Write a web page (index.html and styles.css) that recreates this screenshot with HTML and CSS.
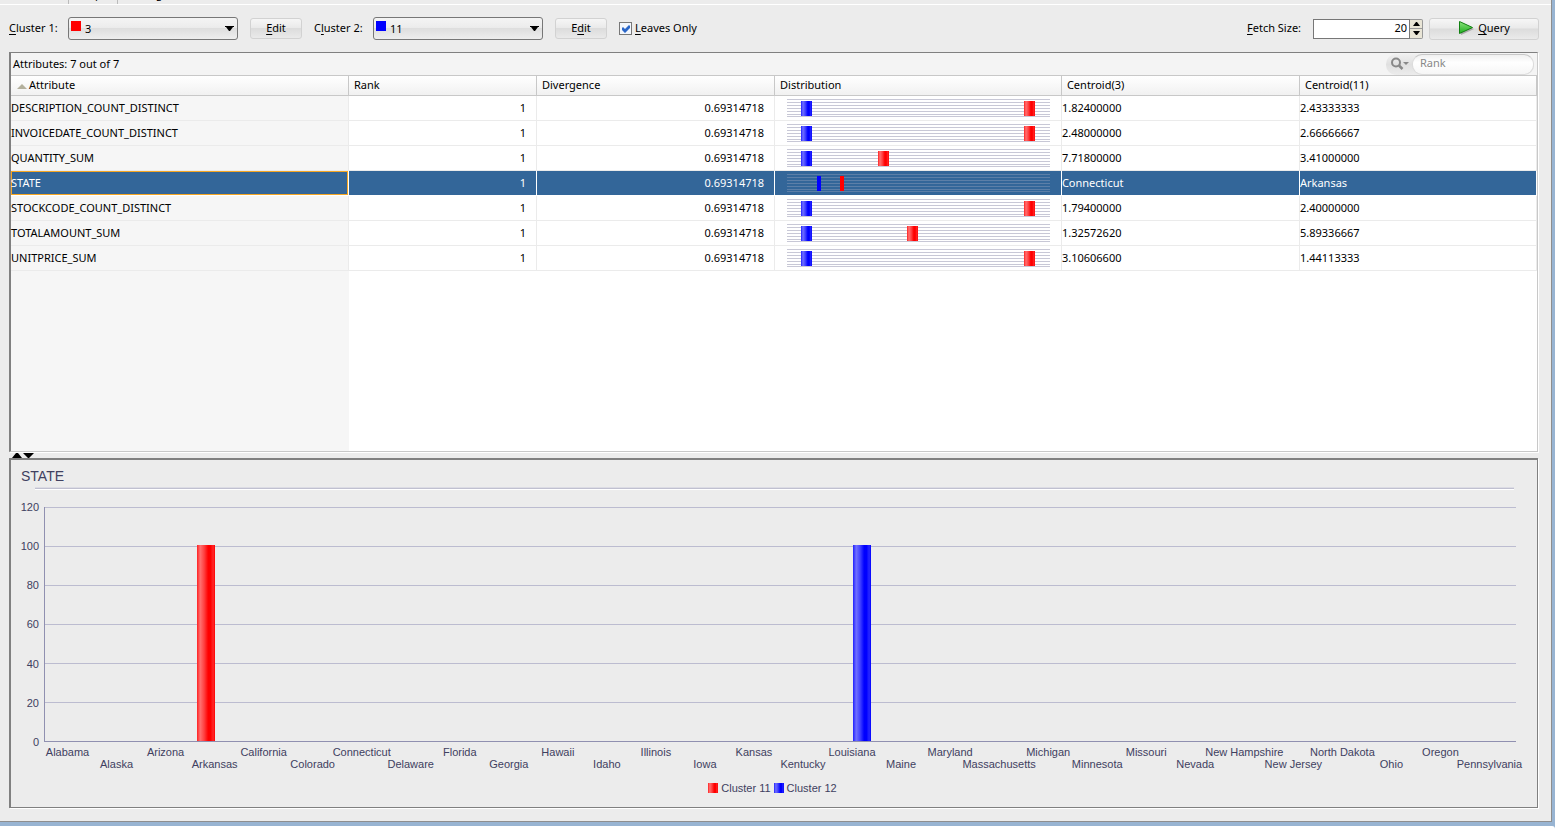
FILE: index.html
```html
<!DOCTYPE html>
<html lang="en">
<head>
<meta charset="utf-8">
<title>Cluster Compare</title>
<link rel="stylesheet" href="styles.css">
</head>
<body>
<main class="window">
  <nav class="tabs" aria-label="Views">
    <span class="tab">Tree,</span>
    <span class="tab tab-active">Compare</span>
    <span class="tab tab-last">Settings,</span>
  </nav>
  <form class="toolbar">
    <label class="caption" for="cluster1"><u>C</u>luster 1:</label>
    <span class="combo">
      <select id="cluster1"><option>3</option></select>
      <span class="swatch red"></span>
      <svg class="arrow" viewBox="0 0 9 5"><path d="M0 0H9V1H8L5 5H4L1 1H0Z"/></svg>
    </span>
    <button type="button" class="btn edit"><span><u>E</u>dit</span></button>
    <label class="caption" for="cluster2">C<u>l</u>uster 2:</label>
    <span class="combo">
      <select id="cluster2"><option>11</option></select>
      <span class="swatch blue"></span>
      <svg class="arrow" viewBox="0 0 9 5"><path d="M0 0H9V1H8L5 5H4L1 1H0Z"/></svg>
    </span>
    <button type="button" class="btn edit"><span>E<u>d</u>it</span></button>
    <label class="check"><input type="checkbox" checked><svg class="tick" viewBox="0 0 8 8"><path d="M0 3L1 2L3 4L7 0L8 1V3L3 8L0 5Z"/></svg><span><u>L</u>eaves Only</span></label>
    <span class="spacer"></span>
    <label class="caption fetch" for="fetch"><u>F</u>etch Size:</label>
    <span class="spinner">
      <input id="fetch" type="text" value="20">
      <span class="steps">
        <button type="button" aria-label="Increase"><svg viewBox="0 0 7 4"><path d="M3 0H4L7 4H0Z"/></svg></button>
        <button type="button" aria-label="Decrease"><svg viewBox="0 0 7 4"><path d="M0 0H7L4 4H3Z"/></svg></button>
      </span>
    </span>
    <button type="button" class="btn query">
      <svg class="play" viewBox="0 0 16 16"><defs><linearGradient id="pg" x1="0" y1="0" x2="0" y2="1"><stop offset="0" stop-color="#8be37c"/><stop offset="1" stop-color="#1fae1f"/></linearGradient></defs><path d="M3 3L16 9L3 15Z" fill="#aaa"/><path d="M1.500 1.500V13.500L14.500 7.500Z" fill="url(#pg)" stroke="#108010"/></svg>
      <span><u>Q</u>uery</span>
    </button>
  </form>

  <section class="grid-panel">
    <div class="grid-bar">
      <span>Attributes: 7 out of 7</span>
      <div class="search">
        <button type="button" aria-label="Search options"><svg viewBox="0 0 20 14"><circle cx="6" cy="5.500" r="4" fill="none" stroke="#888" stroke-width="2"/><path d="M9 8.500L12.500 12" stroke="#888" stroke-width="2.500"/><path d="M13 5H19L16 8Z" fill="#888"/></svg></button>
        <input type="text" placeholder="Rank" aria-label="Search">
      </div>
    </div>
    <div class="grid-body">
    <table>
      <colgroup><col class="c1"><col class="c2"><col class="c3"><col class="c4"><col class="c3"><col></colgroup>
      <thead><tr><th><svg class="sort" viewBox="0 0 10 5"><path d="M5 0L10 5H0Z"/></svg>Attribute</th><th>Rank</th><th>Divergence</th><th>Distribution</th><th>Centroid(3)</th><th>Centroid(11)</th></tr></thead>
      <tbody id="rows"></tbody>
    </table>
    </div>
  </section>

  <div class="splitter"><svg viewBox="0 0 22 5"><path d="M0 5L4 0H6L10 5ZM11 0H22L17 5H16Z"/></svg></div>

  <section class="chart-panel">
    <h2>STATE</h2>
    <div class="rule"></div>
    <div class="plot-row">
      <div class="y-axis"><span>120</span><span>100</span><span>80</span><span>60</span><span>40</span><span>20</span><span>0</span></div>
      <div class="plot">
        <div class="line"></div><div class="line"></div><div class="line"></div><div class="line"></div><div class="line"></div><div class="line"></div>
        <div class="bar bar-red" style="left:10.34%;height:83.8%"></div>
        <div class="bar bar-blue" style="left:54.93%;height:83.8%"></div>
      </div>
    </div>
    <div class="x-axis" id="states"></div>
    <div class="legend"><span class="key bar-red"></span><span>Cluster 11</span><span class="key bar-blue"></span><span>Cluster 12</span></div>
  </section>
</main>
<script src="app.js"></script>
</body>
</html>
```
FILE: styles.css
```css
* { box-sizing: border-box; }
body { margin: 0; background: #98b4d2; font: 11px/14px Tahoma, "Noto Sans", sans-serif; color: #000; }
button, input, select { font: inherit; color: inherit; }
u { text-underline-offset: 2px; }
.window { display: flex; flex-direction: column; min-height: calc(100vh - 7px); margin-right: 3px; padding-bottom: 13px; background: #ececec; border-right: 1px solid #8e8e8e; border-bottom: 1px solid #8e8e8e; }
body::after { content: ""; display: block; height: 3px; margin-top: 4px; background: #fff; border-top-right-radius: 3px; }

.tabs { display: flex; height: 5px; overflow: hidden; align-items: flex-end; border-bottom: 1px solid #fff; }
.tab { flex: none; height: 17px; padding: 0 4px; width: 68px; }
.tab-active { width: 50px; padding: 0 2px; border: solid #bbb; border-width: 0 1px; }
.tab-last { padding: 0 8px; }

.toolbar { display: flex; align-items: center; height: 47px; padding: 0 12px 0 9px; }
.caption { width: 59px; padding-bottom: 2px; }
.combo { position: relative; width: 170px; height: 23px; margin-right: 12px; }
.combo select { appearance: none; width: 100%; height: 100%; padding: 1px 0 0 16px; border: 1px solid #777; border-radius: 3px; background: linear-gradient(#f4f4f4, #ececec 45%, #dedede 50%, #eee); }
.swatch { position: absolute; left: 3px; top: 4px; width: 10px; height: 10px; }
.red { background: #f00; }
.blue { background: #00f; }
.arrow { position: absolute; right: 4px; top: 9px; width: 9px; height: 5px; }
.btn { display: flex; align-items: center; justify-content: center; gap: 4px; padding: 0 0 2px; border: 1px solid #d2d2d2; border-radius: 3px; background: linear-gradient(#f6f6f6, #eaeaea 45%, #dcdcdc 50%, #eaeaea); }
.edit { width: 52px; height: 21px; margin-right: 12px; }
.check { display: flex; align-items: center; gap: 3px; position: relative; }
.check span { padding-bottom: 2px; }
.check input { appearance: none; width: 13px; height: 13px; margin: 0; border: 1px solid #777; background: #f2f6fc; }
.tick { position: absolute; left: 3px; top: 4px; width: 8px; height: 8px; fill: #2a66c8; }
.spacer { flex: 1; }
.fetch { width: 66px; }
.spinner { display: flex; width: 110px; height: 20px; margin-right: 6px; }
.spinner input { flex: 1; min-width: 0; padding: 0 2px 2px; text-align: right; border: 1px solid #777; background: #fff; }
.steps { display: flex; flex-direction: column; width: 13px; border: 1px solid #999; border-left: 0; border-radius: 0 2px 2px 0; background: #e9e5d6; }
.steps button { flex: 1; display: flex; align-items: center; justify-content: center; padding: 0; border: 0; background: none; }
.steps button + button { border-top: 1px solid #999; }
.steps svg { width: 7px; height: 4px; }
.query { width: 110px; height: 22px; }
.play { width: 16px; height: 16px; }

.grid-panel { display: flex; flex-direction: column; flex: 401 1 0; margin: 0 13px 0 9px; border: solid; border-width: 1px 1px 1px 2px; border-color: #808080 #c8c8c8 #c8c8c8 #808080; box-shadow: 1px 1px #fff; background: #f4f4f4; }
.grid-bar { display: flex; align-items: center; justify-content: space-between; height: 22px; padding: 0 3px 0 2px; }
.search { display: flex; height: 21px; background: linear-gradient(#f0f0f0, #e0e0e0 50%, #ececec); border-radius: 10px; }
.search button { display: flex; align-items: center; width: 26px; padding: 0 2px 0 4px; border: 0; background: none; }
.search svg { width: 20px; height: 14px; }
.search input { width: 122px; padding: 0 7px 2px; border: 1px solid #dcdcdc; border-top-color: #c8c8c8; border-radius: 10px; background: linear-gradient(#f0f0f0, #fff 40%, #f6f6f6); }
.search input::placeholder { color: #888; opacity: 1; }
.grid-body { flex: 1; background: linear-gradient(90deg, #f6f6f6 22.15%, #fff 22.15%); }
table { width: 100%; table-layout: fixed; border-collapse: separate; border-spacing: 0; }
.c1 { width: 22.15%; }
.c2 { width: 12.32%; }
.c3 { width: 15.6%; }
.c4 { width: 18.8%; }
th { height: 21px; padding: 0 5px 2px; text-align: left; font-weight: normal; background: linear-gradient(#fff, #f1f1f1); border: solid #c8c8c8; border-width: 1px 1px 1px 0; }
.sort { width: 10px; height: 5px; margin: 0 2px 0 1px; fill: #b3b09c; }
td { height: 25px; padding: 0; border: solid #ebebeb; border-width: 0 1px 1px 0; }
td.num { padding-right: 10px; text-align: right; }
.selected td { background: #336699; color: #fff; border-color: #fff; }
.selected td:first-child { box-shadow: inset 0 0 0 1px #f5a623; }
.dist { position: relative; height: 18px; margin: 0 11px 0 12px; background: repeating-linear-gradient(#c8c8d6 0 1px, transparent 1px 3px); border-bottom: 1px solid #c8c8d6; }
.selected .dist { background: repeating-linear-gradient(#5c7fa8 0 1px, transparent 1px 3px); border-color: #5c7fa8; }
.mark { position: absolute; top: 2px; width: 11px; height: 15px; }
.thin { width: 4px; }

.splitter { height: 6px; padding: 1px 0 0 12px; }
.splitter svg { display: block; width: 22px; height: 5px; }

.chart-panel { display: flex; flex-direction: column; flex: 350 1 0; margin: 0 13px 0 9px; border: solid #808080; border-width: 2px 1px 1px 2px; box-shadow: 1px 1px #fff; font: 11px/12px "Liberation Sans", Arial, sans-serif; color: #404060; }
h2 { margin: 8px 10px 3px; font-size: 14px; line-height: 16px; font-weight: normal; }
.rule { height: 3px; margin: 0 23px 0 24px; background: linear-gradient(#dcdce4 0 1px, #c0c0d0 1px 2px, #fff 2px); }
.plot-row { display: flex; flex: 1; margin: 17px 21px 0 0; }
.y-axis { display: flex; flex-direction: column; justify-content: space-between; width: 28px; margin: -6px 5px -6px 0; text-align: right; }
.plot { position: relative; display: flex; flex: 1; flex-direction: column; border-left: 1px solid #9090b0; border-bottom: 1px solid #9090b0; }
.line { flex: 1; border-top: 1px solid #bcbcd0; }
.bar { position: absolute; bottom: 0; width: 1.25%; }
.bar-red { background: linear-gradient(90deg, #ff2020, #ff7070 18%, #ff4040 40%, #f00 62%, #f00 75%, #ff2828 90%, #f00); }
.bar-blue { background: linear-gradient(90deg, #2020ff, #7070ff 18%, #4040ff 40%, #00f 62%, #00f 75%, #2828ff 90%, #00f); }
.x-axis { display: grid; grid-template-columns: repeat(30, minmax(0, 1fr)); margin: 4px 23px 0 32px; }
.x-axis span { display: flex; justify-content: center; white-space: nowrap; }
.x-axis span:nth-child(even) { padding-top: 12px; }
.legend { display: flex; justify-content: center; gap: 3px; padding: 12px 3px 13px 0; }
.key { width: 10px; height: 10px; margin-top: 1px; }
```
FILE: app.js
```javascript
const rows = [
  ["DESCRIPTION_COUNT_DISTINCT", 14, 237, "1.82400000", "2.43333333"],
  ["INVOICEDATE_COUNT_DISTINCT", 14, 237, "2.48000000", "2.66666667"],
  ["QUANTITY_SUM", 14, 91, "7.71800000", "3.41000000"],
  ["STATE", 30, 53, "Connecticut", "Arkansas"],
  ["STOCKCODE_COUNT_DISTINCT", 14, 237, "1.79400000", "2.40000000"],
  ["TOTALAMOUNT_SUM", 14, 120, "1.32572620", "5.89336667"],
  ["UNITPRICE_SUM", 14, 237, "3.10606600", "1.44113333"]
];
const pct = v => (v / 263 * 100).toFixed(2) + "%";
document.getElementById("rows").innerHTML = rows.map(([name, b, r, c3, c11]) => {
  const sel = name === "STATE";
  const blue = sel ? "thin blue" : "bar-blue";
  const red = sel ? "thin red" : "bar-red";
  return `<tr class="${sel ? "selected" : ""}"><td>${name}</td><td class="num">1</td><td class="num">0.69314718</td>` +
    `<td><div class="dist"><span class="mark ${blue}" style="left:${pct(b)}"></span><span class="mark ${red}" style="left:${pct(r)}"></span></div></td>` +
    `<td>${c3}</td><td>${c11}</td></tr>`;
}).join("");
const states = "Alabama,Alaska,Arizona,Arkansas,California,Colorado,Connecticut,Delaware,Florida,Georgia,Hawaii,Idaho,Illinois,Iowa,Kansas,Kentucky,Louisiana,Maine,Maryland,Massachusetts,Michigan,Minnesota,Missouri,Nevada,New Hampshire,New Jersey,North Dakota,Ohio,Oregon,Pennsylvania";
document.getElementById("states").innerHTML = states.split(",").map(s => `<span>${s}</span>`).join("");
```
